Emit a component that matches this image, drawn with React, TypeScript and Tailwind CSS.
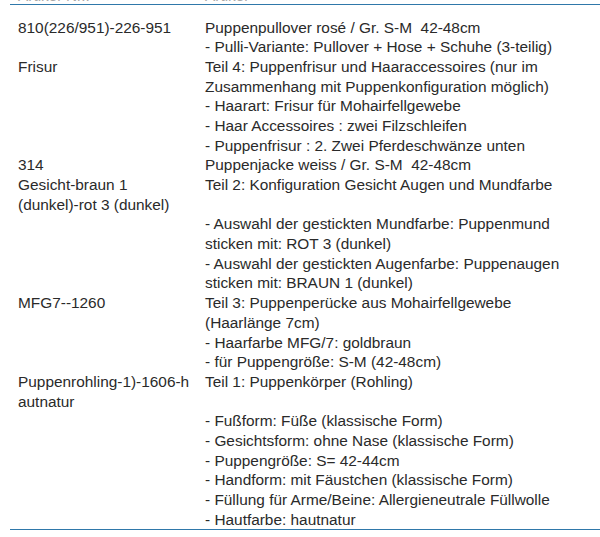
type Row = {
  code: string[];
  lines: string[];
};

const rows: Row[] = [
  {
    code: ["810(226/951)-226-951"],
    lines: [
      "Puppenpullover rosé / Gr. S-M  42-48cm",
      "- Pulli-Variante: Pullover + Hose + Schuhe (3-teilig)",
    ],
  },
  {
    code: ["Frisur"],
    lines: [
      "Teil 4: Puppenfrisur und Haaraccessoires (nur im",
      "Zusammenhang mit Puppenkonfiguration möglich)",
      "- Haarart: Frisur für Mohairfellgewebe",
      "- Haar Accessoires : zwei Filzschleifen",
      "- Puppenfrisur : 2. Zwei Pferdeschwänze unten",
    ],
  },
  {
    code: ["314"],
    lines: ["Puppenjacke weiss / Gr. S-M  42-48cm"],
  },
  {
    code: ["Gesicht-braun 1", "(dunkel)-rot 3 (dunkel)"],
    lines: [
      "Teil 2: Konfiguration Gesicht Augen und Mundfarbe",
      "",
      "- Auswahl der gestickten Mundfarbe: Puppenmund",
      "sticken mit: ROT 3 (dunkel)",
      "- Auswahl der gestickten Augenfarbe: Puppenaugen",
      "sticken mit: BRAUN 1 (dunkel)",
    ],
  },
  {
    code: ["MFG7--1260"],
    lines: [
      "Teil 3: Puppenperücke aus Mohairfellgewebe",
      "(Haarlänge 7cm)",
      "- Haarfarbe MFG/7: goldbraun",
      "- für Puppengröße: S-M (42-48cm)",
    ],
  },
  {
    code: ["Puppenrohling-1)-1606-h", "autnatur"],
    lines: [
      "Teil 1: Puppenkörper (Rohling)",
      "",
      "- Fußform: Füße (klassische Form)",
      "- Gesichtsform: ohne Nase (klassische Form)",
      "- Puppengröße: S= 42-44cm",
      "- Handform: mit Fäustchen (klassische Form)",
      "- Füllung für Arme/Beine: Allergieneutrale Füllwolle",
      "- Hautfarbe: hautnatur",
    ],
  },
];

function Line({ text }: { text: string }) {
  return <div className="h-[19.7px] whitespace-pre">{text || "\u00a0"}</div>;
}

export default function App() {
  return (
    <div className="w-[600px] h-[537px] overflow-hidden bg-white font-['Liberation_Sans',Arial,sans-serif] text-[15.4px] leading-[19.7px] text-[#2a2a2a]">
      {/* cut-off header row */}
      <div className="h-[4px] overflow-hidden pl-[18px] grid grid-cols-[187px_1fr] text-[#a8a8a8]">
        <div className="-mt-[14px]">Artikel-Nr.:</div>
        <div className="-mt-[14px]">Artikel</div>
      </div>

      <div className="ml-[10px] border-t-[1.5px] border-b-[1.5px] border-[#2f78aa] pt-[12.5px] pl-[8px]">
        {rows.map((row, i) => (
          <div key={i} className="grid grid-cols-[187px_1fr]">
            <div>
              {row.code.map((c, j) => (
                <Line key={j} text={c} />
              ))}
            </div>
            <div>
              {row.lines.map((l, j) => (
                <Line key={j} text={l} />
              ))}
            </div>
          </div>
        ))}
      </div>
    </div>
  );
}
